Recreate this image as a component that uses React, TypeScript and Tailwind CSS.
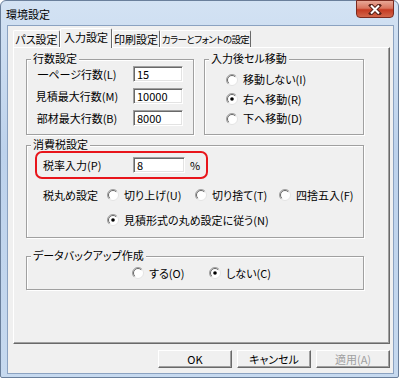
import React from "react";

const Radio: React.FC<{ checked?: boolean }> = ({ checked }) => (
  <svg width="12" height="12" viewBox="0 0 12 12" className="shrink-0">
    <circle cx="6" cy="6" r="5.5" fill="#fff" stroke="#e3e3e3" />
    <path d="M2.1 9.9A5.5 5.5 0 0 1 9.9 2.1" fill="none" stroke="#a0a0a0" />
    <path d="M2.8 9.2A4.5 4.5 0 0 1 9.2 2.8" fill="none" stroke="#696969" />
    {checked && <circle cx="6" cy="6" r="1.8" fill="#000" />}
  </svg>
);

const Option: React.FC<{ label: string; checked?: boolean; className?: string }> = ({
  label,
  checked,
  className = "",
}) => (
  <div className={`flex items-center gap-[5px] whitespace-nowrap ${className}`}>
    <Radio checked={checked} />
    <span>{label}</span>
  </div>
);

const Group: React.FC<{ title: string; className?: string; children?: React.ReactNode }> = ({
  title,
  className = "",
  children,
}) => (
  <div
    className={`relative border border-[#a0a0a0] shadow-[inset_1px_1px_0_#fff,1px_1px_0_#fff] ${className}`}
  >
    <span className="absolute -top-[8px] left-[4px] bg-[#f0f0f0] px-[2px] leading-[13px] whitespace-nowrap">
      {title}
    </span>
    {children}
  </div>
);

const Field: React.FC<{ value: string; className?: string }> = ({ value, className = "" }) => (
  <div
    className={`h-[16px] bg-white border border-t-[#a0a0a0] border-l-[#a0a0a0] border-r-[#fff] border-b-[#fff] shadow-[inset_1px_1px_0_#696969,inset_-1px_-1px_0_#e3e3e3] flex items-center pl-[3px] leading-none ${className}`}
  >
    {value}
  </div>
);

const Button: React.FC<{ label: string; disabled?: boolean }> = ({ label, disabled }) => (
  <div
    className={`w-[74px] h-[18px] flex items-center justify-center border border-t-white border-l-white border-r-[#696969] border-b-[#696969] shadow-[inset_-1px_-1px_0_#a0a0a0] bg-[#f0f0f0] ${
      disabled ? "text-[#a0a0a0]" : "text-black"
    }`}
  >
    {label}
  </div>
);

const tabs = ["パス設定", "入力設定", "印刷設定", "カラーとフォントの設定"];
const tabWidths = [
  "w-[47px]",
  "w-[52px]",
  "w-[48px]",
  "w-[91px] text-[9.5px] tracking-[-0.6px]",
];

export default function App() {
  return (
    <div className="w-[400px] h-[379px] bg-white text-black text-[11px] leading-[13px] font-['Noto_Sans_CJK_JP',sans-serif] [font-feature-settings:'palt']">
      <div className="w-[399px] h-[378px] flex flex-col rounded-t-[6px] rounded-b-[2px] border border-[#6a7f9b] bg-[linear-gradient(#d3e2f3,#bdd2ec_40%,#c6d9ef)]">
        {/* title bar */}
        <div className="h-[24px] flex items-start justify-between pl-[5px]">
          <span className="mt-[7px] text-[11px]">環境設定</span>
          <div className="mr-[4px] w-[38px] h-[18px] -mt-px rounded-b-[4px] border border-[#7b2a1f] bg-[linear-gradient(#e8a796,#d9755f_45%,#c53a22_55%,#d2664a)] flex items-center justify-center">
            <svg width="14" height="11" viewBox="0 0 14 11">
              <path
                d="M3 1.5 L11 9.5 M11 1.5 L3 9.5"
                stroke="#5a2218"
                strokeWidth="4"
                strokeLinecap="square"
              />
              <path d="M3 1.5 L11 9.5 M11 1.5 L3 9.5" stroke="#fff" strokeWidth="2" />
            </svg>
          </div>
        </div>

        {/* client area */}
        <div className="flex-1 ml-[6px] mr-[4px] mb-[3px] border border-[#8ba2c1] bg-[#f0f0f0] pl-[5px] pr-[3px] pt-[2px] flex flex-col">
          {/* tabs */}
          <div className="h-[19px] flex items-end">
            {tabs.map((t, i) =>
              i === 1 ? (
                <div
                  key={t}
                  className={`${tabWidths[i]} relative z-10 -mb-px h-[20px] bg-[#f0f0f0] border-t border-l border-r border-t-white border-l-white border-r-[#696969] rounded-t-[2px] flex items-center justify-center pb-[3px] whitespace-nowrap`}
                >
                  {t}
                </div>
              ) : (
                <div
                  key={t}
                  className={`${tabWidths[i]} h-[17px] border-t border-l border-r border-t-white border-l-white border-r-[#696969] rounded-t-[2px] flex items-center justify-center whitespace-nowrap`}
                >
                  {t}
                </div>
              )
            )}
          </div>

          {/* panel */}
          <div className="h-[297px] border border-t-white border-l-white border-r-[#696969] border-b-[#696969] shadow-[inset_-1px_-1px_0_#a0a0a0] pl-[12px] pt-[11px]">
            <div className="flex gap-[10px]">
              <Group title="行数設定" className="w-[168px] h-[76px]">
                <div className="pt-[6px] flex flex-col gap-[6px]">
                  {[
                    ["一ページ行数(L)", "15"],
                    ["見積最大行数(M)", "10000"],
                    ["部材最大行数(B)", "8000"],
                  ].map(([l, v]) => (
                    <div key={l} className="h-[16px] flex items-center">
                      <span className="w-[100px] text-center whitespace-nowrap">{l}</span>
                      <Field value={v} className="ml-[6px] w-[50px]" />
                    </div>
                  ))}
                </div>
              </Group>
              <Group title="入力後セル移動" className="w-[160px] h-[76px]">
                <div className="pt-[10px] pl-[21px] flex flex-col">
                  <Option label="移動しない(I)" className="h-[19.5px]" />
                  <Option label="右へ移動(R)" checked className="h-[19.5px]" />
                  <Option label="下へ移動(D)" className="h-[19.5px]" />
                </div>
              </Group>
            </div>

            <Group title="消費税設定" className="mt-[10px] w-[338px] h-[93px]">
              <div className="ml-[8px] mt-[5px] w-[173px] h-[28px] border-2 border-[#e8151b] rounded-[7px] flex items-center pl-[6px]">
                <span className="w-[90px]">税率入力(P)</span>
                <Field value="8" className="w-[52px]" />
                <span className="ml-[5px]">%</span>
              </div>
              <div className="mt-[8px] h-[16px] flex items-center pl-[16px]">
                <span className="w-[64px]">税丸め設定</span>
                <Option label="切り上げ(U)" className="w-[88px]" />
                <Option label="切り捨て(T)" className="w-[84px]" />
                <Option label="四捨五入(F)" />
              </div>
              <div className="mt-[9px] h-[16px] flex items-center pl-[80px]">
                <Option label="見積形式の丸め設定に従う(N)" checked />
              </div>
            </Group>

            <Group title="データバックアップ作成" className="mt-[18px] w-[338px] h-[34px]">
              <div className="pt-[8px] h-[24px] flex items-center pl-[105px]">
                <Option label="する(O)" className="w-[77px]" />
                <Option label="しない(C)" checked />
              </div>
            </Group>
          </div>

          {/* buttons */}
          <div className="mt-[6px] flex justify-end gap-[5px]">
            <Button label="OK" />
            <Button label="キャンセル" />
            <Button label="適用(A)" disabled />
          </div>
        </div>
      </div>
    </div>
  );
}
